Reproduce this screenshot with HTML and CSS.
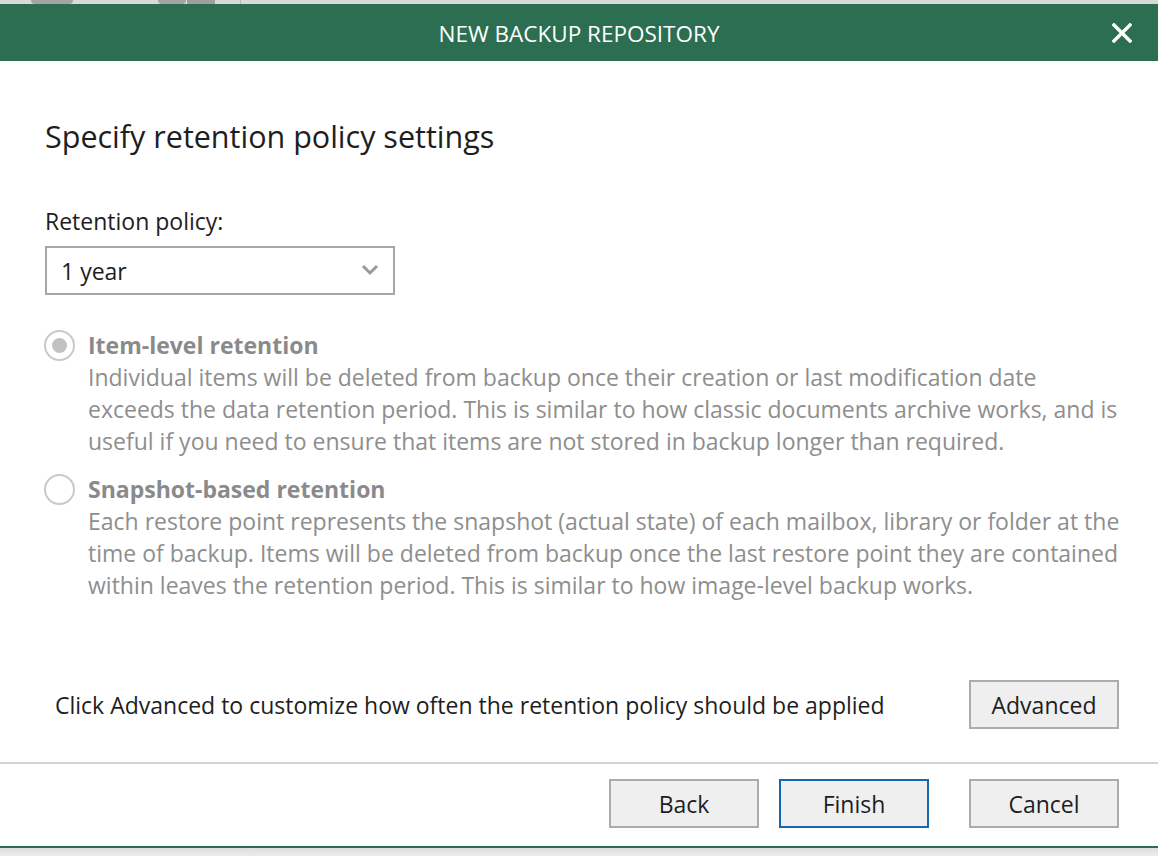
FILE: index.html
```html
<!DOCTYPE html>
<html lang="en">
<head>
<meta charset="utf-8">
<title>New Backup Repository</title>
<link rel="stylesheet" href="styles.css">
</head>
<body>
<div class="backdrop">
  <span class="blob blob-a"></span>
  <span class="blob blob-b"></span>
  <span class="blob blob-c"></span>
  <span class="blob blob-d"></span>
</div>
<div class="dialog">
  <header class="titlebar">
    <div class="title">NEW BACKUP REPOSITORY</div>
    <button class="close" aria-label="Close">
      <svg width="20" height="20" viewBox="0 0 20 20"><path d="M2 2 L18 18 M18 2 L2 18" stroke="#fff" stroke-width="3.4" stroke-linecap="square" fill="none"/></svg>
    </button>
  </header>
  <main class="content">
    <h1 class="heading">Specify retention policy settings</h1>
    <label class="field-label">Retention policy:</label>
    <div class="select">
      <span class="select-value">1 year</span>
      <svg class="chevron" width="18" height="12" viewBox="0 0 18 12"><path d="M2 2 L9 9 L16 2" stroke="#9a9a9a" stroke-width="3" fill="none"/></svg>
    </div>
    <div class="option">
      <div class="option-head">
        <span class="radio checked"></span>
        <span class="option-title">Item-level retention</span>
      </div>
      <p class="option-desc">Individual items will be deleted from backup once their creation or last modification date<br>exceeds the data retention period. This is similar to how classic documents archive works, and is<br>useful if you need to ensure that items are not stored in backup longer than required.</p>
    </div>
    <div class="option">
      <div class="option-head">
        <span class="radio"></span>
        <span class="option-title">Snapshot-based retention</span>
      </div>
      <p class="option-desc">Each restore point represents the snapshot (actual state) of each mailbox, library or folder at the<br>time of backup. Items will be deleted from backup once the last restore point they are contained<br>within leaves the retention period. This is similar to how image-level backup works.</p>
    </div>
    <div class="advanced-row">
      <span class="advanced-text">Click Advanced to customize how often the retention policy should be applied</span>
      <button class="btn">Advanced</button>
    </div>
  </main>
  <footer class="footer">
    <button class="btn">Back</button>
    <button class="btn primary">Finish</button>
    <button class="btn cancel">Cancel</button>
  </footer>
</div>
<div class="shadow"></div>
</body>
</html>
```
FILE: styles.css
```css
html, body {
  margin: 0;
  padding: 0;
  background: #ffffff;
}
body {
  width: 1158px;
  height: 856px;
  overflow: hidden;
  font-family: "Open Sans", "Noto Sans", sans-serif;
  color: #1e1e1e;
}
.backdrop {
  height: 4px;
  background: #d9d9d9;
  display: flex;
  align-items: stretch;
}
.blob {
  display: block;
  background: #a4a4a4;
}
.blob-a { width: 42px; margin-left: 31px; border-radius: 0 0 6px 6px; }
.blob-b { width: 28px; margin-left: 85px; border-radius: 0 0 6px 6px; }
.blob-c { width: 28px; margin-left: 1px; background: #9e9e9e; }
.blob-d { width: 1px; margin-left: 25px; background: #b8b8b8; }
.dialog {
  display: flex;
  flex-direction: column;
  height: 844px;
  border-bottom: 2px solid #2a6e52;
  box-sizing: border-box;
}
.titlebar {
  height: 57px;
  flex: none;
  background: #2b6e51;
  display: flex;
  align-items: center;
  justify-content: center;
  position: relative;
}
.title {
  color: #ffffff;
  font-size: 22.5px;
  margin-top: 1px;
}
.close {
  position: absolute;
  right: 26px;
  top: 19px;
  width: 20px;
  height: 20px;
  padding: 0;
  border: 0;
  background: transparent;
  display: flex;
}
.content {
  flex: 1;
  padding: 57px 39px 0 45px;
  display: flex;
  flex-direction: column;
  align-items: flex-start;
}
.heading {
  margin: 0;
  font-size: 30.5px;
  font-weight: 400;
  line-height: 36px;
  color: #1e1e1e;
}
.field-label {
  margin-top: 53px;
  font-size: 23px;
  line-height: 28px;
}
.select {
  margin-top: 11px;
  width: 350px;
  height: 49px;
  box-sizing: border-box;
  border: 2px solid #a6a6a6;
  display: flex;
  align-items: center;
  justify-content: space-between;
  padding: 0 14px 0 14px;
  font-size: 23px;
}
.chevron { margin-top: -2px; }
.option {
  display: flex;
  flex-direction: column;
  margin-top: 34px;
  color: #8c8c8c;
}
.option + .option { margin-top: 16px; }
.option-head {
  display: flex;
  align-items: center;
  height: 32px;
  gap: 13px;
  margin-left: -1px;
}
.radio {
  width: 31px;
  height: 31px;
  box-sizing: border-box;
  border: 2px solid #c9c9c9;
  border-radius: 50%;
  display: flex;
  align-items: center;
  justify-content: center;
}
.radio.checked::after {
  content: "";
  width: 15px;
  height: 15px;
  border-radius: 50%;
  background: #c2c2c2;
}
.option-title {
  font-size: 23px;
  font-weight: 700;
  color: #8a8a8a;
}
.option-desc {
  margin: 0 0 0 43px;
  font-size: 23px;
  line-height: 32px;
  color: #8e8e8e;
  white-space: nowrap;
}
.advanced-row {
  align-self: stretch;
  margin-top: 79px;
  padding-left: 10px;
  display: flex;
  align-items: center;
  justify-content: space-between;
}
.advanced-text {
  font-size: 23px;
  color: #1e1e1e;
}
.btn {
  width: 150px;
  height: 49px;
  box-sizing: border-box;
  background: #efefef;
  border: 2px solid #acacac;
  font-family: inherit;
  font-size: 23px;
  color: #1e1e1e;
  padding: 0;
}
.footer {
  flex: none;
  margin-top: 33px;
  border-top: 2px solid #d4d4d4;
  padding: 15px 39px 0 0;
  height: 80px;
  display: flex;
  justify-content: flex-end;
  gap: 20px;
}
.btn.primary { border-color: #1568b0; }
.btn.cancel { margin-left: 20px; }
.shadow {
  height: 10px;
  background: linear-gradient(#dedede, #efefef);
}
```
